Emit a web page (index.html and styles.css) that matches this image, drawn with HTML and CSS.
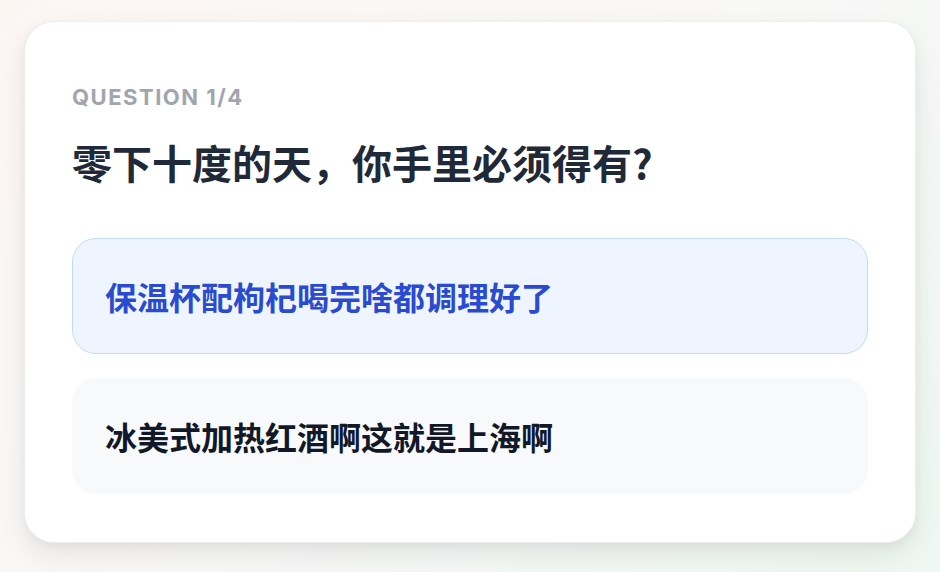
FILE: index.html
```html
<!DOCTYPE html>
<html lang="zh-CN">
<head>
<meta charset="utf-8">
<title>Quiz</title>
<link rel="stylesheet" href="styles.css">
</head>
<body>
  <main class="page">
    <section class="card">
      <div class="label">QUESTION 1/4</div>
      <h1 class="question">零下十度的天，你手里必须得有?</h1>
      <div class="options">
        <button class="option option-selected">保温杯配枸杞喝完啥都调理好了</button>
        <button class="option">冰美式加热红酒啊这就是上海啊</button>
      </div>
    </section>
  </main>
</body>
</html>
```

FILE: styles.css
```css
html, body {
  margin: 0;
  padding: 0;
  height: 100%;
}
body {
  background: linear-gradient(135deg, #fcf6f3 0%, #f8f8f7 50%, #eef7f1 100%);
  font-family: Inter, "Noto Sans CJK SC", sans-serif;
}
.page {
  padding: 21px 24px 0 24px;
}
.card {
  width: 892px;
  box-sizing: border-box;
  background: #ffffff;
  border: 1px solid #eceef1;
  border-radius: 30px;
  padding: 61px 47px 48px 47px;
  box-shadow: 0 12px 28px rgba(0, 0, 0, 0.08), 0 3px 8px rgba(0, 0, 0, 0.04);
}
.label {
  font-family: Inter, "Noto Sans CJK SC", sans-serif;
  font-weight: 700;
  font-size: 22px;
  line-height: 28px;
  letter-spacing: 1.5px;
  color: #a1a5ae;
}
.question {
  margin: 23px 0 0 0;
  font-family: "Noto Sans CJK SC", sans-serif;
  font-weight: 700;
  font-size: 40px;
  line-height: 56px;
  color: #1f2937;
}
.options {
  margin-top: 48px;
  display: flex;
  flex-direction: column;
  gap: 24px;
}
.option {
  display: block;
  width: 100%;
  text-align: left;
  font-family: "Noto Sans CJK SC", sans-serif;
  font-weight: 700;
  font-size: 32px;
  line-height: 50px;
  padding: 32px;
  border-radius: 24px;
  border: 1px solid transparent;
  background: #f8f9fb;
  color: #111827;
  cursor: pointer;
}
.option-selected {
  background: #eff5fe;
  border-color: #c3dafc;
  color: #2a4bcf;
}
```
